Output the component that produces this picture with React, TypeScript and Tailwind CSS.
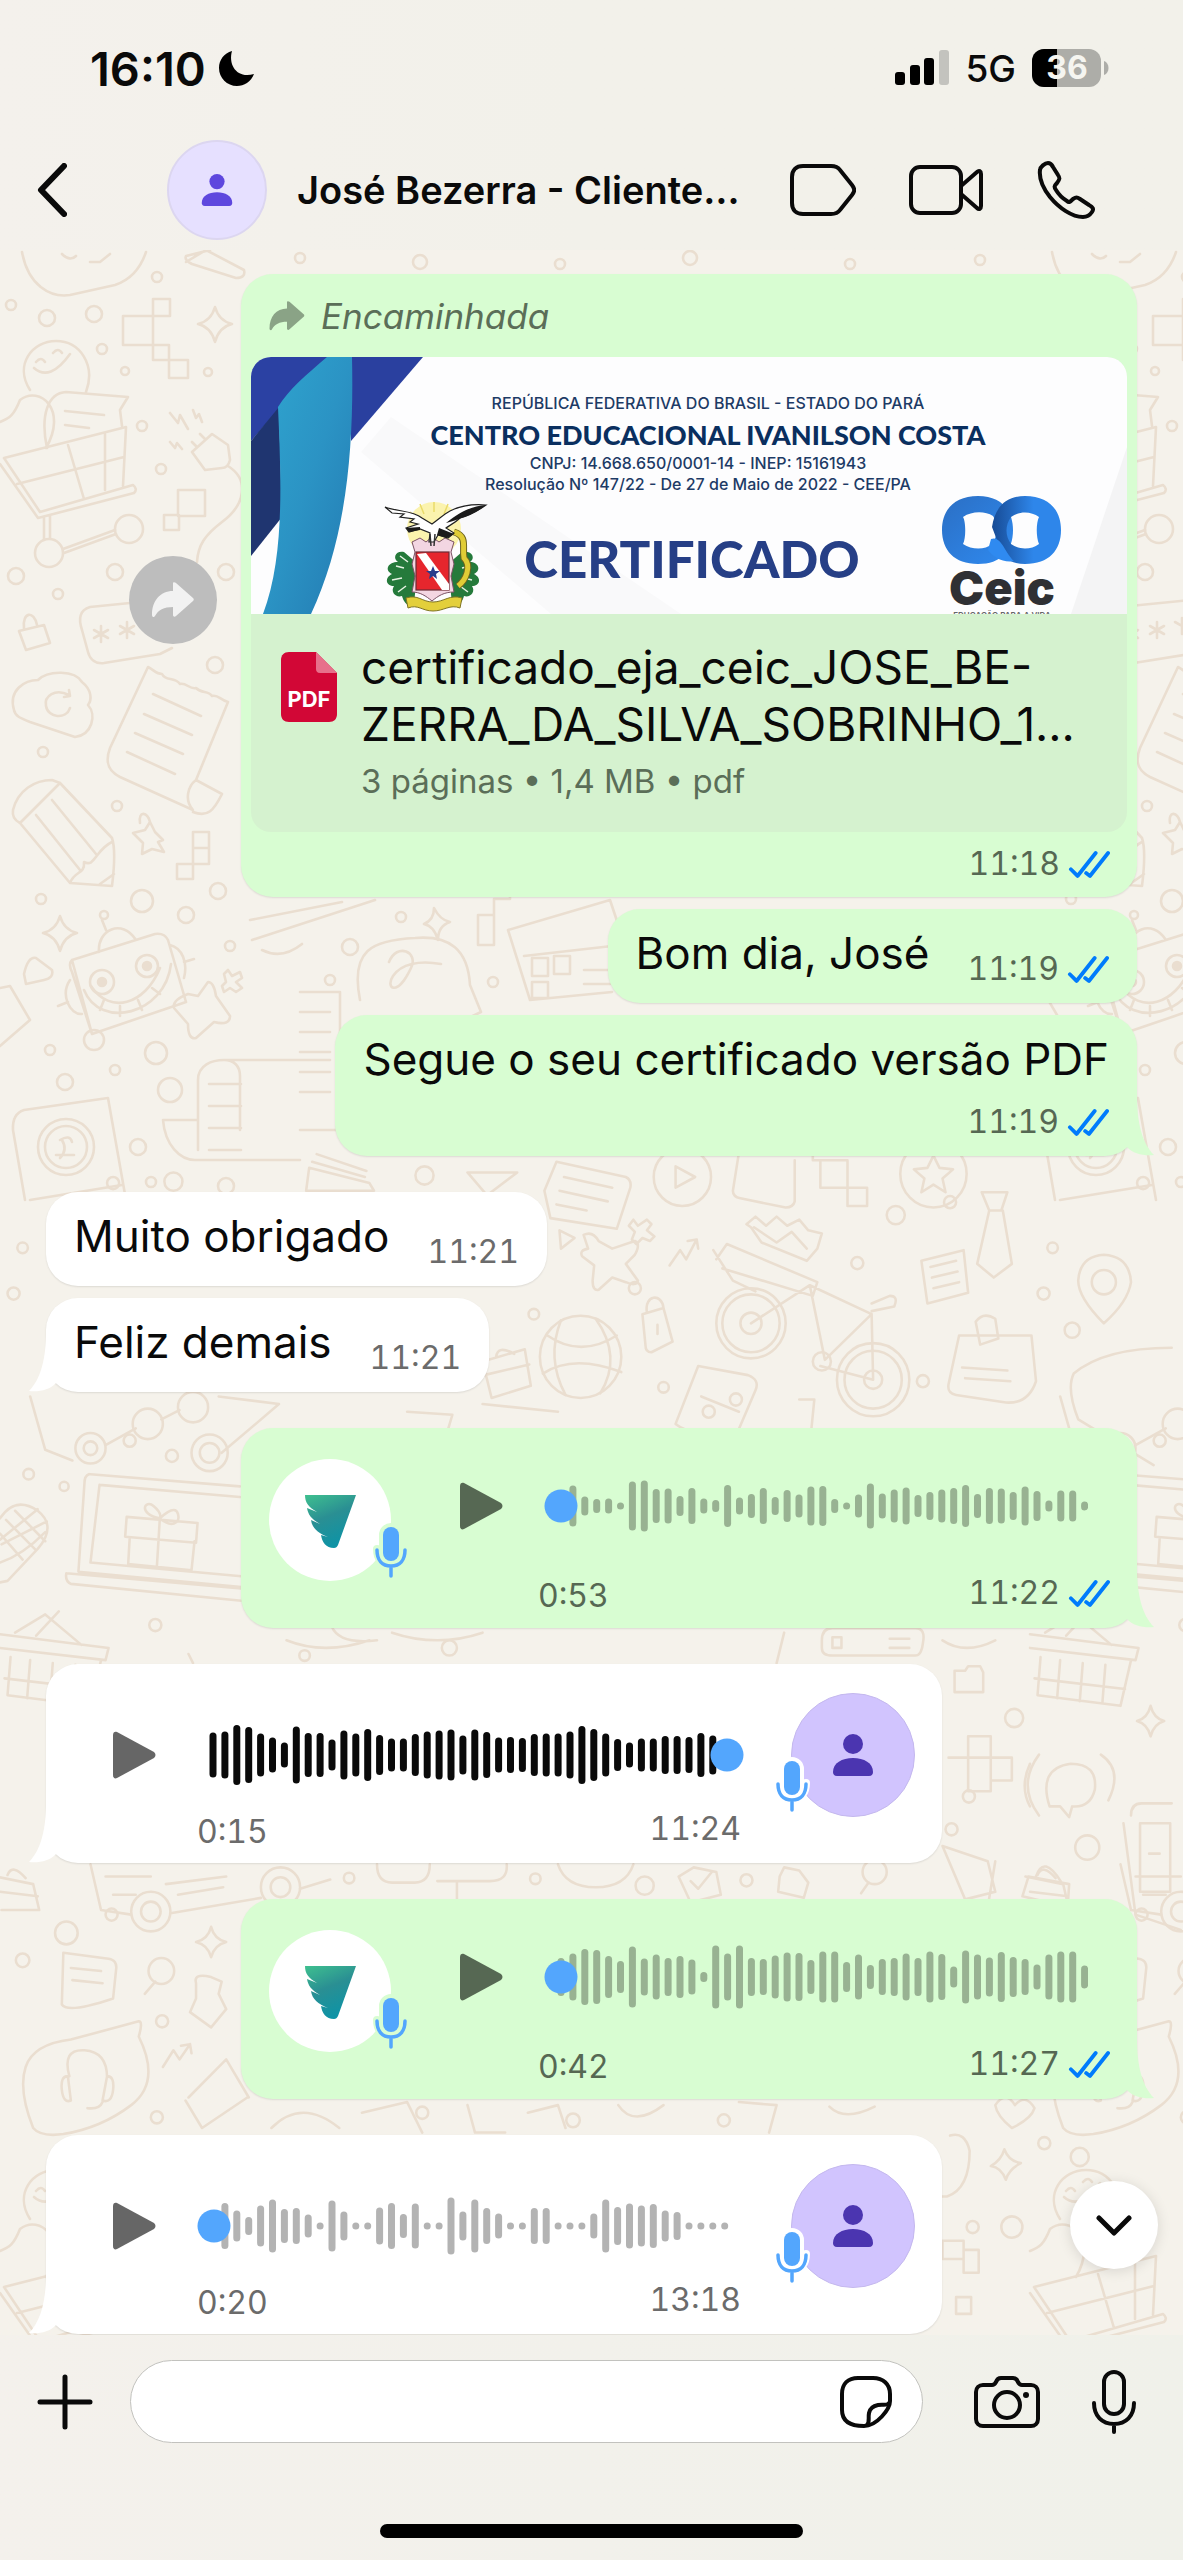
import type { ReactNode } from "react";

type Tone = "sent" | "received";

const wave53 = [
  0, 41, 19, 14, 15, 7, 49, 51, 34, 35, 20, 36, 15, 12, 42, 17, 24, 36, 18, 32, 23, 39, 40, 14, 7,
  23, 45, 25, 33, 37, 22, 28, 33, 36, 42, 24, 36, 35, 28, 39, 30, 11, 31, 31, 9,
];
const wave15 = [
  45, 47, 60, 56, 43, 35, 25, 57, 44, 44, 31, 49, 43, 52, 40, 33, 33, 42, 47, 49, 51, 39, 51, 46,
  35, 36, 34, 42, 43, 43, 47, 58, 52, 43, 32, 25, 33, 33, 38, 38, 36, 44, 39,
];
const wave42 = [
  38, 47, 56, 54, 42, 32, 61, 37, 45, 38, 42, 35, 10, 63, 47, 63, 38, 36, 43, 49, 48, 34, 51, 51,
  30, 45, 24, 36, 38, 47, 38, 51, 46, 21, 53, 45, 39, 50, 40, 36, 25, 45, 51, 51, 23,
];
const wave20 = [
  0, 46, 31, 18, 41, 53, 34, 36, 23, 7, 51, 29, 7, 7, 37, 46, 24, 45, 7, 7, 57, 29, 53, 36, 25, 7,
  7, 36, 36, 7, 7, 7, 25, 53, 38, 45, 41, 44, 31, 28, 7, 7, 7, 7,
];

export default function App() {
  return (
    <div className="flex min-h-screen flex-col bg-[#f5f2eb] font-['Inter',sans-serif] text-[#0a0a0a]">
      <header className="bg-linear-to-r from-[#f4f1ec] via-[#f2f1ea] to-[#f2f1ea]">
        <StatusBar />
        <ChatHeader />
      </header>

      <main className="relative flex flex-1 flex-col gap-9 overflow-hidden px-[46px] pt-6">
        <Wallpaper />

        <section className="relative flex flex-col items-end gap-3">
          <div className="flex w-full items-center justify-end gap-6">
            <button
              aria-label="Encaminhar"
              className="mt-7 flex size-[88px] shrink-0 items-center justify-center rounded-full bg-[#bdbdbd] text-[#f2f2f2]"
            >
              <ForwardArrow className="h-9 w-[42px]" />
            </button>
            <DocumentMessage />
          </div>
          <TextMessage tone="sent" text="Bom dia, José" time="11:19" />
          <TextMessage tone="sent" text="Segue o seu certificado versão PDF" time="11:19" stacked tail />
        </section>

        <section className="relative flex flex-col items-start gap-3">
          <TextMessage tone="received" text="Muito obrigado" time="11:21" />
          <TextMessage tone="received" text="Feliz demais" time="11:21" tail />
        </section>

        <VoiceSent bars={wave53} duration="0:53" time="11:22" />
        <VoiceReceived bars={wave15} dot={530} color="#0a0a0a" duration="0:15" time="11:24" />
        <VoiceSent bars={wave42} duration="0:42" time="11:27" />
        <VoiceReceived bars={wave20} dot={17} color="#b3b3b3" duration="0:20" time="13:18" />

        <button
          aria-label="Ir para o fim"
          className="absolute right-[25px] bottom-[66px] flex size-[88px] items-center justify-center rounded-full bg-white shadow-[0_2px_14px_rgba(0,0,0,0.12)]"
        >
          <svg viewBox="0 0 36 22" className="h-[22px] w-9" fill="none" stroke="currentColor" strokeWidth="5" strokeLinecap="round" strokeLinejoin="round">
            <path d="M3 4 18 19 33 4" />
          </svg>
        </button>
      </main>

      <Composer />
    </div>
  );
}

function StatusBar() {
  return (
    <div className="flex h-[140px] items-start justify-between pt-11 pr-[74px] pl-[90px]">
      <div className="flex h-12 items-center gap-3">
        <span className="text-[47px] leading-none font-semibold">16:10</span>
        <svg viewBox="0 0 37 37" className="size-[37px]">
          <path d="M14 1C10 15 19 29 36 24 33 32 26 36 19 36 9 36 1 28 1 18 1 10 6 3 14 1Z" fill="#000" />
        </svg>
      </div>
      <div className="flex h-12 items-center gap-4">
        <svg viewBox="0 0 54 36" className="h-9 w-[54px]">
          <rect x="0" y="22" width="10" height="13" rx="3" fill="#000" />
          <rect x="15" y="15" width="10" height="20" rx="3" fill="#000" />
          <rect x="29" y="8" width="10" height="27" rx="3" fill="#000" />
          <rect x="44" y="0" width="10" height="35" rx="3" fill="#c3c3be" />
        </svg>
        <span className="text-[37px] leading-none font-medium">5G</span>
        <svg viewBox="0 0 77 38" className="h-[38px] w-[77px]">
          <clipPath id="battery-level">
            <rect width="25" height="38" />
          </clipPath>
          <rect width="69" height="38" rx="12" fill="#adada8" />
          <rect width="69" height="38" rx="12" fill="#000" clipPath="url(#battery-level)" />
          <path d="M72 12c6 2 6 12 0 14Z" fill="#adada8" />
          <text x="35" y="30" textAnchor="middle" fill="#f5f5f0" fontSize="32" fontWeight="700">36</text>
        </svg>
      </div>
    </div>
  );
}

function ChatHeader() {
  return (
    <div className="flex h-[110px] items-center pr-[88px] pb-[10px] pl-[37px]">
      <button aria-label="Voltar" className="shrink-0">
        <svg viewBox="0 0 30 54" className="h-[54px] w-[30px]" fill="none" stroke="currentColor" strokeWidth="6" strokeLinecap="round" strokeLinejoin="round">
          <path d="M27 3 4 27 27 51" />
        </svg>
      </button>
      <div className="ml-[100px] flex size-[100px] shrink-0 items-center justify-center rounded-full border-2 border-[#dcd6f0] bg-[#e6e0ff] text-[#5e47de]">
        <PersonIcon className="h-[34px] w-8" />
      </div>
      <h1 className="ml-[30px] min-w-0 flex-1 text-[38px] leading-[48px] font-semibold whitespace-nowrap">
        José Bezerra - Cliente…
      </h1>
      <button aria-label="Etiqueta" className="shrink-0">
        <svg viewBox="0 0 66 52" className="h-[52px] w-[66px]" fill="none" stroke="currentColor" strokeWidth="4" strokeLinejoin="round">
          <path d="M13 2H41C45 2 48 3 50 6L62 21C65 25 65 27 62 31L50 46C48 49 45 50 41 50H13C6 50 2 46 2 39V13C2 6 6 2 13 2Z" />
        </svg>
      </button>
      <button aria-label="Chamada de vídeo" className="ml-[53px] shrink-0">
        <svg viewBox="0 0 74 50" className="h-[50px] w-[74px]" fill="none" stroke="currentColor" strokeWidth="4" strokeLinejoin="round">
          <rect x="2" y="2" width="50" height="46" rx="9" />
          <path d="M52 21 68 7C70 5 72 6 72 9V41C72 44 70 45 68 43L52 29" />
        </svg>
      </button>
      <button aria-label="Chamada de voz" className="ml-[54px] shrink-0">
        <svg viewBox="0 0 58 58" className="size-[58px]" fill="none" stroke="currentColor" strokeWidth="4" strokeLinejoin="round">
          <path d="M3 9C3 6 8 2 11 2 13 2 15 4 16 6L21 14C23 17 23 18 20 22 17 25 17 26 19 29 22 34 25 37 30 40 32 42 33 41 36 38 39 36 40 36 43 38L52 44C56 46 57 48 55 51 53 54 49 56 46 56 35 56 22 47 13 36 6 27 2 17 3 9Z" />
        </svg>
      </button>
    </div>
  );
}

function Bubble({ tone, tail, className = "", children }: { tone: Tone; tail?: boolean; className?: string; children: ReactNode }) {
  const sent = tone === "sent";
  return (
    <div
      className={`relative rounded-[32px] shadow-[0_1px_2px_rgba(0,0,0,0.1)] ${sent ? "bg-[#d8fdd2]" : "bg-white"} ${className}`}
    >
      {tail && (
        <svg
          viewBox="0 0 34 60"
          className={`absolute bottom-0 h-[60px] w-[34px] ${sent ? "-right-[17px] text-[#d8fdd2]" : "-left-[17px] -scale-x-100 text-white"}`}
        >
          <path d="M17 0C17 26 22 47 34 59 24 60 13 58 7 51L0 40V0Z" fill="currentColor" />
        </svg>
      )}
      {children}
    </div>
  );
}

function Timestamp({ tone, time }: { tone: Tone; time: string }) {
  return (
    <span className={`flex items-center gap-2 text-[32px] leading-[44px] tabular-nums ${tone === "sent" ? "text-[#566853]" : "text-[#6b6b6b]"}`}>
      {time}
      {tone === "sent" && (
        <svg viewBox="0 0 44 30" className="h-[29px] w-[42px]" fill="none" stroke="#007bfc" strokeWidth="4" strokeLinecap="round" strokeLinejoin="round">
          <path d="M3 20 10 27 29 3M19 24 23 27 42 3" />
        </svg>
      )}
    </span>
  );
}

type TextMessageProps = { tone: Tone; text: string; time: string; stacked?: boolean; tail?: boolean };

function TextMessage({ tone, text, time, stacked, tail }: TextMessageProps) {
  return (
    <Bubble tone={tone} tail={tail} className="px-7 pt-4 pb-3">
      <div className={stacked ? "flex flex-col items-end gap-[13px]" : "flex items-end gap-[38px]"}>
        <p className={`text-[44px] leading-[56px] ${stacked ? "" : "pb-[10px]"}`}>{text}</p>
        <Timestamp tone={tone} time={time} />
      </div>
    </Bubble>
  );
}

function DocumentMessage() {
  return (
    <Bubble tone="sent" className="w-full max-w-[896px] px-[10px] pb-[11px]">
      <div className="flex items-center gap-4 px-[18px] pt-[22px] pb-[21px] text-[#5b6e58]">
        <ForwardArrow className="h-[30px] w-9 text-[#8aa386]" />
        <span className="text-[35px] leading-10 italic">Encaminhada</span>
      </div>
      <div className="overflow-hidden rounded-[20px] bg-[#d5f2cf]">
        <Certificate />
        <div className="flex gap-6 pt-[25px] pr-8 pb-[29px] pl-[30px]">
          <svg viewBox="0 0 56 70" className="mt-[13px] h-[70px] w-14 shrink-0">
            <path d="M8 0H35L56 21V62C56 67 53 70 48 70H8C3 70 0 67 0 62V8C0 3 3 0 8 0Z" fill="#d20736" />
            <path d="M35 0 56 21H39C36 21 35 19 35 17Z" fill="#e7708b" />
            <text x="28" y="55" textAnchor="middle" fill="#fff" fontSize="22" fontWeight="700">PDF</text>
          </svg>
          <div>
            <p className="text-[46px] leading-[57px]">
              certificado_eja_ceic_JOSE_BE-
              <br />
              ZERRA_DA_SILVA_SOBRINHO_1…
            </p>
            <p className="mt-[6px] text-[33px] leading-[44px] text-[#5b6e58]">3 páginas • 1,4 MB • pdf</p>
          </div>
        </div>
      </div>
      <div className="flex justify-end pt-[10px] pr-[17px]">
        <Timestamp tone="sent" time="11:18" />
      </div>
    </Bubble>
  );
}

function Certificate() {
  return (
    <svg viewBox="0 0 876 257" className="block w-full bg-[#fdfdfe]" fontFamily="Inter, sans-serif">
      <defs>
        <linearGradient id="ribbon" x1="0" y1="0" x2="1" y2="1">
          <stop offset="0" stopColor="#2fa5cf" />
          <stop offset="0.5" stopColor="#2b93c4" />
          <stop offset="1" stopColor="#237ab2" />
        </linearGradient>
        <linearGradient id="ring-left" x1="0" y1="0" x2="1" y2="1">
          <stop offset="0" stopColor="#2b6fc4" />
          <stop offset="1" stopColor="#2f8af0" />
        </linearGradient>
        <linearGradient id="ring-right" x1="0" y1="0" x2="1" y2="0">
          <stop offset="0" stopColor="#174b95" />
          <stop offset="0.6" stopColor="#2e86ea" />
        </linearGradient>
      </defs>
      <path d="M876 90 820 257H876Z" fill="#f4f4f5" />
      <path d="M110 95 300 257H430L140 60Z" fill="#f9f9fa" />

      {/* ribbon in the corner */}
      <path d="M0 0H78L28 52 0 84Z" fill="#2b41a3" />
      <path d="M0 84 28 50 31 160 0 199Z" fill="#1f3570" />
      <path d="M100 0H172L100 84Z" fill="#2a409f" />
      <path d="M76 0H101C103 90 96 180 60 257H12C34 200 30 120 27 50 38 32 55 18 76 0Z" fill="url(#ribbon)" />

      <g textAnchor="middle" fill="#1d3b66">
        <text x="457" y="52" fontSize="16" fontWeight="500">REPÚBLICA FEDERATIVA DO BRASIL - ESTADO DO PARÁ</text>
        <text x="457" y="88" fontSize="27" fontWeight="900" fontFamily="Lato, sans-serif" fill="#0a2f5f">CENTRO EDUCACIONAL IVANILSON COSTA</text>
        <text x="447" y="112" fontSize="16" fontWeight="500">CNPJ: 14.668.650/0001-14 - INEP: 15161943</text>
        <text x="447" y="133" fontSize="16" fontWeight="500">Resolução Nº 147/22 - De 27 de Maio de 2022 - CEE/PA</text>
        <text x="441" y="221" fontSize="51" fontWeight="900" fontFamily="Lato, sans-serif" fill="#263f86">CERTIFICADO</text>
      </g>

      {/* state coat of arms */}
      <g transform="translate(133 147)">
        <circle cx="50" cy="25" r="27" fill="#fbf3ae" />
        <path d="M50 -2V8M36 0 40 10M64 0 60 10M26 8 33 15M74 10 68 16" stroke="#eadb6a" strokeWidth="1.5" />
        <path d="M20 48C12 46 8 54 14 58 4 58 0 66 8 70 0 74 2 82 10 82 6 88 12 94 18 92 20 100 26 104 30 100L34 60Z" fill="#257a3b" />
        <path d="M78 48C88 46 92 54 86 58 94 58 98 66 90 70 98 74 96 82 88 82 92 88 86 94 80 92 78 100 72 104 68 100L64 60Z" fill="#257a3b" />
        <path d="M12 62 20 64M8 76 18 74M14 88 22 82M16 52 24 58M86 62 78 64M88 76 80 74M84 88 76 82" stroke="#e8f3e4" strokeWidth="1.5" />
        <path d="M70 28C84 32 78 44 80 54 88 62 82 76 74 82" fill="none" stroke="#6d6420" strokeWidth="7" />
        <path d="M70 28C84 32 78 44 80 54 88 62 82 76 74 82" fill="none" stroke="#e0cc36" strokeWidth="5" />
        <path d="M28 38 36 34 42 38 48 33 55 38 61 34 70 38 67 48 70 60 67 72 70 88C60 88 54 92 48 97 42 92 36 88 28 88L31 72 28 60 31 48Z" fill="#f3d6e2" stroke="#7a5164" strokeWidth="1" />
        <rect x="32" y="48" width="33" height="38" fill="#e6262d" stroke="#6b2b34" strokeWidth="1.2" />
        <path d="M33 50 42 49 65 80V86H58Z" fill="#fff" />
        <path d="M49 62 51 67 56 67 52 70 53 75 49 72 45 75 46 70 42 67 47 67Z" fill="#2a3c8c" />
        <path d="M22 94C34 90 38 98 49 98 60 98 66 90 78 94L76 104C66 100 60 107 49 107 38 107 34 100 24 104Z" fill="#e3cf3b" stroke="#7f7422" strokeWidth="1" />
        <path d="M1 3C14 8 28 6 38 14L48 20C54 16 60 10 66 7 78 1 90 0 102 1 92 8 84 12 76 14 70 20 64 22 62 24L70 29 64 34 54 31 50 38 45 38 46 29 36 25 25 28 22 24 34 20 26 18 30 15 16 13 20 10 8 9Z" fill="#fff" stroke="#222" strokeWidth="1.2" />
        <path d="M102 1C90 2 78 6 62 19 76 15 92 10 102 1ZM55 24 70 30 63 34 53 31ZM22 24 36 23 36 26 25 28Z" fill="#1b1b1b" />
        <path d="M46 30 47 42M51 30 50 42" stroke="#333" strokeWidth="1.5" />
      </g>

      {/* school logo */}
      <path fillRule="evenodd" d="M727 139C751 139 762 154 762 173 762 194 750 207 727 207 703 207 691 193 691 173 691 153 703 139 727 139ZM712 160C715 165 715 181 712 187 721 193 734 193 741 187 747 180 747 166 742 159 734 154 721 154 712 160Z" fill="url(#ring-left)" />
      <path fillRule="evenodd" d="M774 139C798 139 810 153 810 173 810 193 798 207 774 207 764 207 757 204 752 199L741 170C744 150 755 139 774 139ZM760 160C754 168 754 179 760 187 768 193 780 193 788 187 785 180 785 166 788 160 780 154 768 154 760 160Z" fill="url(#ring-right)" />
      <path d="M740 182C750 178 754 196 763 204 752 206 742 200 737 193Z" fill="#2f8af0" />
      <text x="751" y="248" textAnchor="middle" fontSize="47" fontWeight="900" fill="#2f3034">Ceic</text>
      <text x="751" y="261" textAnchor="middle" fontSize="8" fontWeight="600" fill="#666">EDUCAÇÃO PARA A VIDA</text>
    </svg>
  );
}

function VoiceSent({ bars, duration, time }: { bars: number[]; duration: string; time: string }) {
  return (
    <Bubble tone="sent" tail className="flex min-h-[200px] w-full max-w-[896px] self-end pr-[27px] pl-7">
      <div className="relative mt-[31px] size-[122px] shrink-0 rounded-full bg-white">
        <svg viewBox="0 0 122 122" className="size-full">
          <defs>
            <linearGradient id={`wing-${duration}`} x1="0" y1="0" x2="0.4" y2="1">
              <stop offset="0" stopColor="#3fc08f" />
              <stop offset="0.5" stopColor="#2a8f93" />
              <stop offset="1" stopColor="#0f93a5" />
            </linearGradient>
          </defs>
          <path d="M36 36H87L69 86C68 88 67 89 65 89 57 89 53 83 52 76L59 78C49 74 43 69 42 61L51 65C42 60 39 55 38 49L48 53C39 48 36 43 36 36Z" fill={`url(#wing-${duration})`} />
        </svg>
        <MicBadge className="-right-[19px] -bottom-px" halo="#d8fdd2" />
      </div>
      <PlayButton className="mt-[54px] ml-[68px] text-[#566853]" />
      <div className="ml-[35px] flex min-w-0 flex-1 flex-col">
        <Waveform bars={bars} offset={23} dot={23} color="#98b292" className="mt-[46px]" />
        <div className="mt-[33px] flex items-start justify-between">
          <span className="pt-[3px] text-[32px] leading-[44px] text-[#566853] tabular-nums">{duration}</span>
          <Timestamp tone="sent" time={time} />
        </div>
      </div>
    </Bubble>
  );
}

type VoiceReceivedProps = { bars: number[]; dot: number; color: string; duration: string; time: string };

function VoiceReceived({ bars, dot, color, duration, time }: VoiceReceivedProps) {
  return (
    <Bubble tone="received" tail className="flex min-h-[199px] w-full max-w-[896px] self-start pr-[27px] pl-[66px]">
      <PlayButton className="mt-[67px] text-[#666]" />
      <div className="ml-[41px] flex min-w-0 flex-1 flex-col">
        <Waveform bars={bars} offset={16} dot={dot} color={color} className="mt-[59px]" />
        <div className="mt-5 flex items-start justify-between">
          <span className="pt-[3px] text-[32px] leading-[44px] text-[#6b6b6b] tabular-nums">{duration}</span>
          <Timestamp tone="received" time={time} />
        </div>
      </div>
      <div className="relative mt-[29px] ml-[50px] flex size-[124px] shrink-0 items-center justify-center rounded-full border border-[#c4b8ee] bg-[#d1c4fe] text-[#4b35b0]">
        <PersonIcon className="size-[42px]" />
        <MicBadge className="bottom-0 -left-[19px]" halo="#fff" />
      </div>
    </Bubble>
  );
}

type WaveformProps = { bars: number[]; offset: number; dot: number; color: string; className: string };

function Waveform({ bars, offset, dot, color, className }: WaveformProps) {
  return (
    <svg viewBox="0 0 550 64" className={`h-16 w-[550px] shrink-0 ${className}`}>
      {bars.map((h, i) =>
        h > 0 ? <rect key={i} x={offset + i * 11.9 - 3.5} y={32 - h / 2} width="7" height={h} rx="3.5" fill={color} /> : null
      )}
      <circle cx={dot} cy="32" r="16.5" fill="#53a6fd" />
    </svg>
  );
}

function PlayButton({ className }: { className: string }) {
  return (
    <button aria-label="Reproduzir" className={`h-12 shrink-0 ${className}`}>
      <svg viewBox="0 0 44 48" className="h-12 w-11" fill="currentColor">
        <path d="M1 4C1 1 3 0 5 1L42 21C44 23 44 25 42 27L5 47C3 48 1 47 1 44Z" />
      </svg>
    </button>
  );
}

function MicBadge({ className, halo }: { className: string; halo: string }) {
  return (
    <svg viewBox="0 0 38 60" className={`absolute h-[60px] w-[38px] ${className}`} fill="none" strokeLinecap="round">
      <g stroke={halo} strokeWidth="8">
        <rect x="11" y="5" width="16" height="34" rx="8" fill={halo} />
        <path d="M5 27C5 37 10 43 19 43S33 37 33 27" />
      </g>
      <rect x="11" y="5" width="16" height="34" rx="8" fill="#53a6fd" />
      <path d="M5 28C5 38 10 44 19 44S33 38 33 28M19 44V54" stroke="#53a6fd" strokeWidth="3.5" />
    </svg>
  );
}

function PersonIcon({ className }: { className: string }) {
  return (
    <svg viewBox="0 0 42 42" className={className} fill="currentColor">
      <circle cx="21" cy="10" r="10" />
      <path d="M1 38C1 29 10 24 21 24S41 29 41 38C41 40 40 42 37 42H5C2 42 1 40 1 38Z" />
    </svg>
  );
}

function ForwardArrow({ className }: { className: string }) {
  return (
    <svg viewBox="0 0 42 36" className={className} fill="currentColor">
      <path d="M21 1C21 0 23 0 24 1L41 16C42 17 42 18 41 19L24 34C23 35 21 35 21 33V25C12 25 6 28 3 34 2 36 0 35 0 33 0 19 8 9 21 9Z" />
    </svg>
  );
}

function Composer() {
  return (
    <footer className="bg-linear-to-r from-[#f4f1ec] to-[#f0f1ea] pt-[25px] pb-[22px]">
      <div className="flex items-center pr-[46px] pl-[37px]">
        <button aria-label="Anexar" className="shrink-0">
          <svg viewBox="0 0 56 56" className="size-14" fill="none" stroke="currentColor" strokeWidth="5" strokeLinecap="round">
            <path d="M28 3V53M3 28H53" />
          </svg>
        </button>
        <div className="relative ml-[37px] min-w-0 flex-1">
          <input
            type="text"
            aria-label="Mensagem"
            className="block h-[83px] w-full rounded-full border border-[#c2c2be] bg-white pr-28 pl-9 text-[44px] outline-none"
          />
          <button aria-label="Figurinhas" className="absolute top-4 right-[31px]">
            <svg viewBox="0 0 52 52" className="size-[52px]" fill="none" stroke="currentColor" strokeWidth="4" strokeLinecap="round" strokeLinejoin="round">
              <path d="M2 18C2 8 8 2 18 2H33C43 2 50 8 50 18V25C50 33 37 50 24 50 8 50 2 44 2 34Z" />
              <path d="M27 49C30 46 28 42 29 37 30 32 33 30 38 29 43 28 47 30 49 27" />
            </svg>
          </button>
        </div>
        <button aria-label="Câmera" className="ml-[51px] shrink-0">
          <svg viewBox="0 0 66 52" className="h-[52px] w-[66px]" fill="none" stroke="currentColor" strokeWidth="4" strokeLinejoin="round">
            <path d="M9 9H18C20 9 21 8 22 6 23 3 25 2 27 2H39C41 2 43 3 44 6 45 8 46 9 48 9H57C61 9 64 12 64 16V43C64 47 61 50 57 50H9C5 50 2 47 2 43V16C2 12 5 9 9 9Z" />
            <circle cx="33" cy="29" r="13" />
            <circle cx="52" cy="19" r="3" fill="currentColor" stroke="none" />
          </svg>
        </button>
        <button aria-label="Gravar áudio" className="ml-[51px] shrink-0">
          <svg viewBox="0 0 46 66" className="h-[66px] w-[46px]" fill="none" stroke="currentColor" strokeWidth="4" strokeLinecap="round">
            <rect x="13" y="3" width="20" height="42" rx="10" />
            <path d="M3 34C3 47 11 55 23 55S43 47 43 34M23 55V63" />
          </svg>
        </button>
      </div>
      <div className="mx-auto mt-[81px] h-[14px] w-[423px] rounded-full bg-black" />
    </footer>
  );
}

const dots = [
  [11, 55, 6], [47, 68, 9], [94, 64, 9], [157, 27, 6], [102, 99, 6], [125, 121, 5], [208, 122, 5], [142, 176, 6],
  [161, 219, 6], [16, 326, 9], [58, 344, 6], [115, 322, 9], [226, 322, 9], [43, 502, 6], [117, 556, 6], [215, 415, 9],
  [41, 649, 6], [142, 651, 12], [186, 665, 9], [218, 641, 9], [230, 696, 6], [50, 800, 6], [65, 832, 9], [115, 820, 6],
  [156, 803, 12], [170, 840, 13], [138, 897, 9], [151, 932, 6], [226, 936, 9], [401, 667, 6], [350, 697, 9],
  [330, 730, 6], [493, 732, 6], [300, 8, 6], [420, 12, 8], [560, 14, 6], [690, 8, 8], [850, 14, 6], [980, 10, 6],
];

// dots of the lower half, in the coordinates of the lower group
const lowerDots = [
  [150, 50, 8], [230, 48, 12], [563, 40, 12], [18, 195, 8], [30, 135, 7], [708, 222, 7], [842, 188, 8], [880, 318, 7],
  [1188, 92, 12], [1137, 155, 8], [1260, 75, 8], [1422, 243, 10], [1224, 310, 8], [206, 630, 8], [38, 432, 7], [172, 388, 8],
  [228, 408, 8], [85, 448, 6], [404, 670, 7], [596, 660, 10], [1345, 752, 12], [1285, 855, 8], [1262, 898, 8], [1442, 922, 16],
  [88, 1034, 15], [148, 1010, 8], [215, 1150, 8], [30, 1070, 9], [208, 1276, 8], [463, 962, 7], [710, 963, 7], [855, 972, 12],
  [990, 965, 8], [1342, 1420, 14], [1385, 1310, 8], [1432, 1328, 12], [1290, 1420, 8], [760, 1280, 9], [560, 1270, 8], [960, 1280, 8],
];

function Wallpaper() {
  return (
    <svg
      viewBox="0 0 1183 2085"
      preserveAspectRatio="xMidYMin slice"
      className="absolute inset-0 size-full"
      fill="none"
      stroke="#eaded0"
      strokeWidth="2.6"
      strokeLinecap="round"
      strokeLinejoin="round"
      aria-hidden="true"
    >
      <g id="doodles">
        {dots.map(([x, y, r]) => (
          <circle key={`${x}-${y}`} cx={x} cy={y} r={r - 1} />
        ))}
        <path d="M22 2C28 35 50 48 70 45L115 35C130 30 140 20 146 2M62 4q8 8 14 2M90 12h10l10-8M186 12l20-12 38 20q2 8-8 8l-44-14q-8-4-6-8l24-6" />
        <path d="M123 66h30v29h-30zM153 49h17v17h-17zM153 95h16v15h-16zM169 110h19v18h-19zM178 240h27v26h-27zM164 265h15v15h-15zM193 582h16v32h-16zM193 598h16M177 614h16v15h-16z" />
        <path d="M215 57q4 14 17 17-13 3-17 18-4-15-17-18 13-3 17-17zM60 666q4 14 17 17-13 3-17 18-4-15-17-18 13-3 17-17z" />

        {/* cart */}
        <path d="M30 140C14 115 32 91 56 91S96 115 86 142M36 112q5-6 9 0M53 103q5-6 9 0M34 118q16 14 36-14M46 198C68 160 40 135 20 150 14 165 10 168 0 172M47 198C40 165 48 143 66 142L128 147 120 160 122 176M65 161l39 4M65 175l24 3" />
        <path d="M4 208 126 177 123 236M4 208 40 262 133 235q5 4 1 8L38 268 0 214M68 195l16 54M105 184v56M17 234 124 207M44 268v22M50 266v22" />
        <circle cx="49" cy="303" r="14" />
        <circle cx="129" cy="279" r="14" />
        <path d="M63 299 115 280M64 303 116 284" />

        {/* plug */}
        <path d="M192 202 212 184 228 195 230 210Q228 218 222 218L205 220ZM200 184l5 5M192 192l5 5M228 216C250 230 245 255 222 272 205 285 198 295 197 312M170 163l8 10 2-8 8 14M193 160l3 8 3-4 3 8M170 192l5 6 2-5 5 6" />

        {/* padlock and password field */}
        <path d="M19 381 44 375 50 393 26 400ZM24 378C22 362 34 360 37 375M90 357 160 350M90 357C80 360 78 368 82 380L88 402C90 410 96 414 104 413L160 404 172 398M101 376v16M94 380l14 8M108 380l-14 8M127 372v16M120 376l14 8M134 376l-14 8M152 368v16M145 372l14 8" />

        {/* cloud */}
        <path d="M14 460C8 440 25 430 38 430 48 420 75 420 82 432 92 440 92 450 88 455 97 465 92 485 75 487L30 472C20 468 15 466 14 460ZM69 445C55 438 44 446 46 456 48 468 66 470 70 458M64 447l6-1-1-6" />

        {/* receipt */}
        <path d="M148 417 110 498C104 514 110 522 120 527L193 560C184 550 188 536 196 530L228 452C220 450 218 444 212 446 208 440 202 444 196 438 190 440 186 432 180 434 174 426 166 432 162 424 156 424 154 420 148 417ZM196 530 222 544C214 560 208 568 193 562M153 444l48 22M144 464l48 21M135 483l48 21M127 502l48 22" />

        {/* pencil */}
        <path d="M13 560C18 540 35 530 52 530L60 533 20 573C14 570 12 566 13 560ZM60 533 112 588C116 600 114 620 112 636L70 633 20 573M36 565 80 620M52 550 96 604M70 633C75 620 85 625 84 612 95 618 95 600 112 592M100 634l14-10" />

        {/* tag, robot */}
        <path d="M133 583 145 580 150 572 155 582 163 590 158 592 164 602 152 599 142 604 143 593ZM140 573C138 560 148 562 150 572" />
        <path d="M72 710 155 684C162 683 166 686 168 690L186 752 92 784ZM72 710Q68 714 72 722L92 784M99 702C97 680 122 668 136 690M106 680l-4-10M170 695C182 698 188 712 184 728M184 712l10-3M70 730C60 745 70 765 82 764M68 752l-10 4M84 740C100 780 165 765 171 714M91 736C110 765 145 755 160 718M100 760l4-10M120 766v-10M142 760l-4-10M160 744l-8-6" />
        <circle cx="102" cy="732" r="12" />
        <circle cx="102" cy="732" r="4" fill="#eaded0" />
        <circle cx="147" cy="716" r="11" />
        <circle cx="147" cy="716" r="4" fill="#eaded0" />
        <circle cx="104" cy="665" r="4" />
        <circle cx="94" cy="790" r="10" />
        <path d="M188 744 198 746 208 732Q214 732 216 746L230 766Q230 776 214 772L196 788Q188 790 188 774L174 758Q172 750 188 744ZM24 724q4-18 12-16l16 12q2 8-8 10l-18 4zM0 738l10-2 20 34-30 26M228 720l4 6 8-4 2 6-6 4 6 6-6 4-6-4-6 4-2-6 4-4-2-8z" />

        {/* banknote and scroll */}
        <path d="M25 950 13 880Q12 864 24 860L108 848 126 950M122 935 30 950M56 905h18M60 890q10-6 12 2M62 890q6 10-2 18" />
        <circle cx="66" cy="897" r="28" />
        <circle cx="66" cy="897" r="21" />
        <path d="M198 900V830C198 815 212 810 224 810H330M240 880V826C240 816 234 810 224 810M198 870h-35C165 895 180 910 195 910H300M209 834h32M209 856h32M209 878h32M209 900h32" />

        {/* strip between the document and the long reply */}
        <path d="M250 670 342 652M252 690 375 650M262 700q20 10 40-6" />
        <path d="M360 750C350 700 372 690 415 688 450 685 468 700 470 735L481 762 460 772M389 712c8-20 30-10 22 6-14 30-26 20-18 8s26-16 48-12M300 742h40V880h-40M300 762h30M300 782h30M300 802h30M300 822h30M300 842h30" />
        <path d="M478 665h16v-16h16v-14M478 665v30h16v-30M508 680 610 650 620 680M508 680 530 750 612 742M524 706 612 696M532 708h16v18h-16zM554 706h16v18h-16zM532 732h16v16h-16zM584 720h26M584 734h26M434 658q6 12 16 14-12 4-12 18-4-14-14-16 10-4 10-16z" />

        <g transform="translate(0 895) scale(0.754 0.762)" strokeWidth="3.4">
          {lowerDots.map(([x, y, r]) => (
            <circle key={`${x}-${y}`} cx={x} cy={y} r={r} />
          ))}
          {/* document, play, dice */}
          <path d="M738 22 830 42Q838 46 836 56L818 110 730 96 722 60ZM748 42l64 14M742 60l64 14M738 78l40 8M410 30 490 50 496 60H406ZM414 22l70 20M420 12l66 22M620 36h66l-40 30zM1088 20h36v36h-36zM1124 56h26v24h-26zM1088 20h-10V0M980 10l-8 50q0 8 10 10l60 12q10 0 12-8V20" />
          <circle cx="905" cy="42" r="38" />
          <path d="M896 28l26 14-26 14zM840 98l6 8 12-8 6 6-6 8 10 8-6 6-10-4-8 8-6-6 4-10-8-8zM742 112l20 10-18 14z" />
          <circle cx="1238" cy="38" r="44" />
          <path d="M1238 14l8 16 18 2-14 12 4 18-16-10-16 10 4-18-14-12 18-2z" />
          {/* star and zigzag */}
          <path d="M774 118Q786 112 794 126L812 136 842 126Q850 130 842 144L830 156 846 178Q844 186 830 180L812 174 794 190Q786 192 786 178L788 158 772 146Q768 138 780 136ZM888 158l14-20 8 12 14-26M912 126l12-2 2 12" />
          {/* bicycle */}
          <circle cx="996" cy="234" r="46" />
          <circle cx="996" cy="234" r="38" />
          <circle cx="996" cy="234" r="14" />
          <circle cx="1158" cy="308" r="48" />
          <circle cx="1158" cy="308" r="38" />
          <circle cx="1158" cy="308" r="12" />
          <path d="M996 234 1074 184 1156 222 1094 282 1074 184M1088 290 1158 308 1156 222M1156 208l24-10q12 0 6 14l-30 6M950 150l14-20 120 50-6 18-120-36M946 138l26 40 30 14M990 104l12-10 14 12 14-12 14 12 16-8 12 14 18 4-6 20-14 16-60-24-14-20zM1000 108l30 20 20-14 20 22" />
          <circle cx="1090" cy="284" r="12" />
          {/* padlock, globe, suitcase */}
          <path d="M852 222l28-8 12 44-28 14q-8 0-8-10zM858 220c-4-24 20-26 22-6M872 236v12" />
          <circle cx="770" cy="278" r="54" />
          <path d="M726 250q44 30 92 0M720 300q40-26 104-2M744 230q-20 50 6 98M790 228q36 50 6 98" />
          <path d="M640 284l56-16 8 48-52 16zM642 302l60-14M658 278q2-16 24-4" />
          {/* tie, note, pin */}
          <path d="M1302 62h34l-8 24h-16zM1312 86h18l12 70-24 18-22-18zM1222 152l56-14 6 56-54 14zM1234 160l34-8M1236 174l34-8M1238 188l34-8M1464 234Q1430 200 1430 178 1432 146 1464 144 1498 146 1500 180 1496 206 1464 234Z" />
          <circle cx="1464" cy="180" r="16" />
          <path d="M1272 250q60 0 96 0l6 60q-10 30-40 28l-66-10q-12-2-10-14zM1294 232q10-14 26-4l4 26-24 8zM1276 292l60 4M1280 306l60 4M926 290l66 12q16 6 10 20l-26 60q-60 0-80-16zM930 330l50 20M1060 334h20l-6 60M640 340l100 10M540 350l60 4-6 20M1424 300q-10 20 6 60l100 60M1424 300q40-34 130-34" />
          <circle cx="940" cy="350" r="8" />
          <circle cx="976" cy="334" r="8" />
          {/* car */}
          <path d="M40 330l20 70 36 14M140 394l40-22M214 360l24-12M290 330l80 10-76 64" />
          <circle cx="120" cy="398" r="20" />
          <circle cx="196" cy="366" r="20" />
          <circle cx="256" cy="344" r="20" />
          <circle cx="278" cy="404" r="24" />
          <circle cx="278" cy="404" r="13" />
          <circle cx="120" cy="398" r="9" />
          {/* laptop with gift */}
          <path d="M120 432 318 448M118 432Q112 434 112 444L104 560 320 580M132 446 318 462M132 446l-12 102 200 18M88 562l232 20M88 562q-2 10 6 14l226 22M168 488l94 8-2 26-94-8zM172 516l-2 34 84 8 4-38M212 490l-4 64M212 490c-30-6-20-26-8-16s8 16 8 16 20-20 24-6-10 18-24 6" />
          {/* corn and fruit */}
          <path d="M0 490q20-30 50-10 26 20 0 50L10 572 0 574M20 480l40 40M8 492l40 40M0 510l30 34M62 494l-60 30M50 478l-50 40M0 548q30-10 60-40" />
          {/* basket */}
          <path d="M0 642 144 660 140 676 0 660M14 672l-4 50 110 14 14-60M40 676l-4 50M70 680l-4 50M100 682l-4 50M6 700l120 14M20 640 60 616 108 656M78 612l-30 32" />
          <path d="M380 650q50 20 110 0M520 640q60 20 120 0M440 632q10 24 60 18M250 668l6 12M1040 640l-10 40M1090 650q0-16 14-16h110q14 0 10 20-2 16-10 16h-110q-14 0-14-10zM1104 646h12v14h-12zM1180 648h26M1180 660h26M1250 650q30 20 70 0" />
          {/* squares, wireless, phone */}
          <path d="M1284 776h30v28h-30zM1284 804h30v44h-30zM1314 804h28v30h-28zM1258 804h26M1266 690h14l4-6h16l4 8v26h-38zM1526 736q4 16 18 20-14 4-18 20-4-16-18-20 14-4 18-20z" />
          <path d="M1392 868q-16-50 28-56 36 0 32 34-6 24-30 22l-4 14-12-14zM1378 800q-30 40 0 80M1366 812q-14 30 0 56M1460 800q30 20 10 60M1250 920l60 20 10 40-40 10zM1320 940l-10 60M1364 960l54 10-2 30-60-14zM1374 960q10-30 34 8M1500 880q0-16 14-16h40M1490 890l16 120 60 20M1512 890h40v90h-40zM1524 930h14" />
          {/* bus and people between the voice notes */}
          <path d="M120 944l14 60 40 6M228 1008l118-20M398 976l40-12M140 960h60M150 984h30M220 970l80-10M236 984l60-10" />
          <circle cx="200" cy="1006" r="26" />
          <circle cx="200" cy="1006" r="13" />
          <circle cx="372" cy="974" r="26" />
          <circle cx="372" cy="974" r="13" />
          <path d="M500 944q0 24 20 24h30q20 0 20-24M580 966h70q24 0 22-22M606 966v26M740 944q10 30 50 30t50-30M900 960l20-12 30 6 6 30-40 10zM916 966l10 10 18-22M1034 960l6-12 20 4 12 16-6 20-34-8z" />
          <circle cx="1160" cy="954" r="16" />
          <path d="M1152 968l-10 14" />
          {/* briefcase, magnifier, note, pin */}
          <path d="M-6 960l50 10 8 34-50 0M0 980l50 6M10 958q6-16 24 4M84 1060l60 8q12 2 10 14l-4 38q-60 20-68 8zM94 1080l40 4M96 1096l40 4M280 1026q4 16 20 20-16 4-20 20-4-16-20-20 16-4 20-20zM260 1100q-4-14 20-8l14 6-4 16 10 20-20 24-28-20 8-18zM216 1210l14-22 8 12 14-20M240 1182l12-2 2 12" />
          <circle cx="214" cy="1084" r="17" />
          <path d="M206 1098l-14 16" />
          {/* headset bubble */}
          <path d="M44 1290q-20-50-10-80 10-30 60-36l90-24q6 0 0 20 30 60-10 90-40 30-90 38-30 4-40-8zM92 1222q-10-36 20-34 30 2 30 36M90 1222q-10 0-8 18t12 14zM142 1222q10 0 8 18t-14 14zM136 1256q-4 10-20 8M250 1250l50-50 30 50M246 1254l22 36 60-40M360 1290q40-40 90 0M480 1270l60-14 20 40M620 1260l10 36h40M700 1270l40-10 10 30M820 1260q20 30 60 0M980 1256l50 4-10 36M1100 1262q20 20 60 0" />
          <path d="M1320 1260q14-20 26 0 14-16 26 4-4 14-30 26-20-16-22-30zM1260 1300q20-6 26 20 0 50-30 60l-10 0M1332 1318q6 16 22 18-16 8-20 22-6-16-20-18 14-8 18-22zM1250 1438h28v24h-28zM1278 1450h20v30h-20zM1268 1512h20v22h-20z" />
        </g>
      </g>
      <use href="#doodles" x="1030" />
      <g transform="translate(0 1829)">
        <path id="cart-again" d="M30 140C14 115 32 91 56 91S96 115 86 142M36 112q5-6 9 0M53 103q5-6 9 0M34 118q16 14 36-14M46 198C68 160 40 135 20 150 14 165 10 168 0 172M4 208 126 177 123 236M4 208 40 262 133 235q5 4 1 8L38 268 0 214M68 195l16 54M105 184v56M17 234 124 207" />
        <use href="#cart-again" x="1030" />
      </g>
    </svg>
  );
}
